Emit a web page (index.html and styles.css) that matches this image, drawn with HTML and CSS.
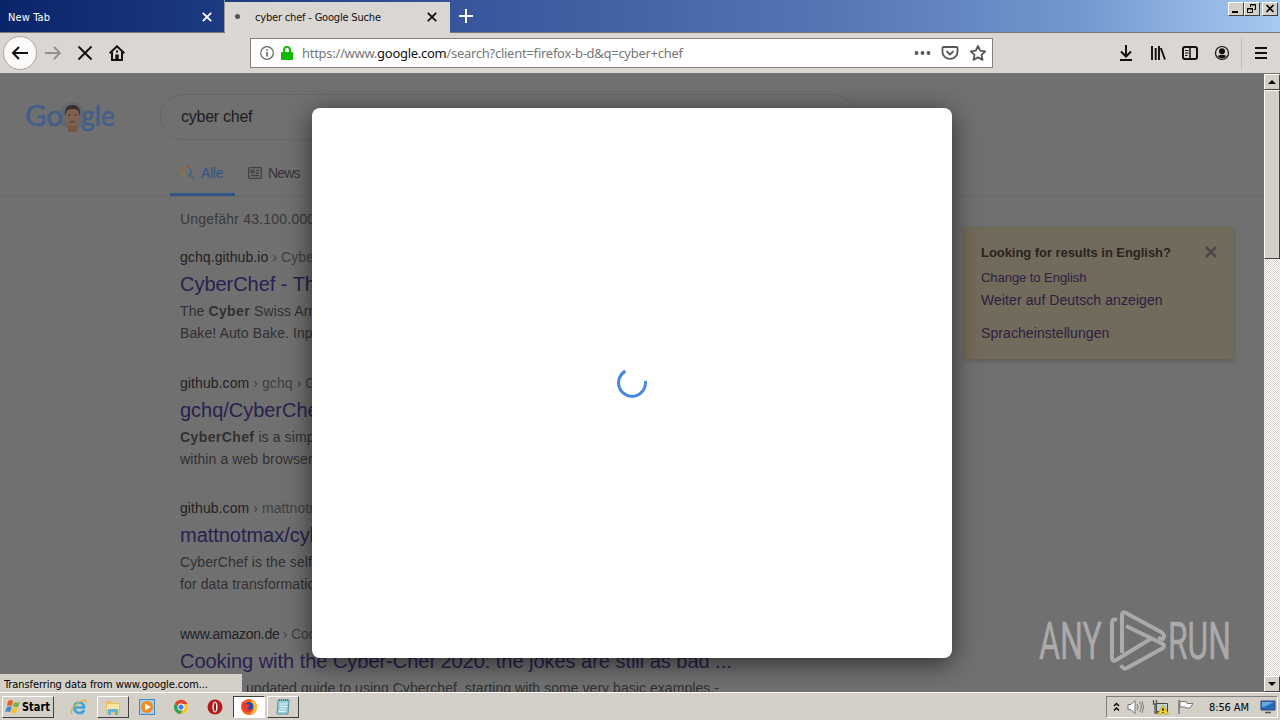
FILE: index.html
```html
<!DOCTYPE html>
<html lang="de">
<head>
    <meta charset="UTF-8">
    <meta name="viewport" content="width=device-width, initial-scale=1.0">
    <title>cyber chef - Google Suche</title>
    <link rel="stylesheet" href="styles.css">
</head>
<body>
    <div class="tabbar">
      <div class="tab">
        <svg class="tabtext" width="46" height="16"><text x="0" y="12" textLength="42">New Tab</text></svg>
        <svg width="10" height="10" viewBox="0 0 10 10"><path d="M.8.8l8.4 8.4M9.2.8L.8 9.2" stroke="#fff" stroke-width="1.8"/></svg>
      </div>
      <div class="tab active">
        <span class="dot"></span>
        <svg class="tabtext" width="130" height="16"><text x="0" y="12" textLength="126">cyber chef - Google Suche</text></svg>
        <svg width="10" height="10" viewBox="0 0 10 10"><path d="M.8.8l8.4 8.4M9.2.8L.8 9.2" stroke="#111" stroke-width="1.8"/></svg>
      </div>
      <svg class="plus" width="14" height="14"><path d="M7 0v14M0 7h14" stroke="#fff" stroke-width="2"/></svg>
      <div class="winbuttons">
        <span class="win"><svg width="14" height="12"><path d="M3 9h6" stroke="#000" stroke-width="2"/></svg></span>
        <span class="win"><svg width="14" height="12"><path d="M5.500 4V1.500h5v5H9M5 2h6M2.500 5.500h5v4h-5zM2 6h6" fill="none" stroke="#000"/></svg></span>
        <span class="win last"><svg width="14" height="12"><path d="M3.500 2l7 7M10.500 2l-7 7" stroke="#000" stroke-width="1.600"/></svg></span>
      </div>
    </div>

    <div class="toolbar">
      <div class="nav">
        <span class="back"><svg width="18" height="16" viewBox="0 0 18 16"><path d="M8 2L2 8l6 6M2 8h15" fill="none" stroke="#111" stroke-width="2"/></svg></span>
        <svg width="18" height="16" viewBox="0 0 18 16"><path d="M10 2l6 6-6 6M16 8H1" fill="none" stroke="#92908d" stroke-width="1.800"/></svg>
        <svg width="16" height="16" viewBox="0 0 16 16"><path d="M1.500 1.500l13 13M14.500 1.500l-13 13" stroke="#111" stroke-width="2"/></svg>
        <svg class="home" width="16" height="16" viewBox="0 0 16 16"><path d="M.7 8.300L8 1.300l7.300 7M3 7v8h10V7" fill="none" stroke="#111" stroke-width="2"/><path d="M6.300 15V9.500h3.400V15z" fill="#111"/><path d="M8 5.500v2" stroke="#111" stroke-width="2"/></svg>
      </div>
      <div class="urlbar">
        <svg width="14" height="14" viewBox="0 0 14 14"><circle cx="7" cy="7" r="6.300" fill="none" stroke="#666" stroke-width="1.200"/><path d="M7 6v4.500M7 3.300v1.500" stroke="#666" stroke-width="1.600"/></svg>
        <svg width="12" height="14" viewBox="0 0 12 14"><path d="M3 7V4a3 3 0 0 1 6 0v3" fill="none" stroke="#12bc00" stroke-width="2"/><rect y="6" width="12" height="8" rx="1" fill="#12b800"/></svg>
        <svg class="url" width="390" height="20"><text x="0" y="15" textLength="381">https://www.<tspan class="host">google.com</tspan>/search?client=firefox-b-d&amp;q=cyber+chef</text></svg>
        <svg class="urlicons" width="74" height="18" viewBox="0 0 74 18">
          <g fill="#555"><circle cx="2.500" cy="9" r="1.900"/><circle cx="8.500" cy="9" r="1.900"/><circle cx="14.500" cy="9" r="1.900"/></g>
          <g fill="none" stroke="#555" stroke-width="1.800">
            <path d="M29.500 3h13q1 0 1 1v4a7.300 6.600 0 0 1-15 0V4q0-1 1-1zM32.500 7.200l3.500 3.300 3.500-3.300" stroke-linejoin="round"/>
            <path d="M64 2l2.200 4.700 5 .6-3.700 3.500 1 5.100L64 13.400l-4.500 2.500 1-5.100-3.700-3.500 5-.6z" stroke-linejoin="round"/>
          </g>
        </svg>
      </div>
      <div class="tools">
        <svg width="16" height="16" viewBox="0 0 16 16"><path d="M8 0v11M3 6.500l5 5 5-5M2 15h12" fill="none" stroke="#111" stroke-width="2"/></svg>
        <svg width="16" height="16" viewBox="0 0 16 16"><path d="M2 1v14M5.700 3v12M9 1v14M10.800 3l4.200 11.500" fill="none" stroke="#111" stroke-width="1.900"/></svg>
        <svg width="16" height="16" viewBox="0 0 16 16"><rect x="1" y="2" width="14" height="12" rx="2" fill="none" stroke="#111" stroke-width="2"/><path d="M8 2v12" stroke="#111" stroke-width="1.500"/><path d="M3 5.500h3.500M3 8h3.500M3 10.500h2.500" stroke="#111"/></svg>
        <svg width="16" height="16" viewBox="0 0 16 16"><circle cx="8" cy="8" r="6.500" fill="none" stroke="#111" stroke-width="1.200"/><circle cx="8" cy="6.300" r="3" fill="#111"/><path d="M3.500 11q4.500-2.500 9 0-4.500 5-9 0z" fill="#111"/></svg>
        <span class="divider"></span>
        <svg width="14" height="14" viewBox="0 0 14 14"><path d="M1 2h12M1 7h12M1 12h12" stroke="#111" stroke-width="2"/></svg>
      </div>
    </div>

    <div class="viewport">
      <div class="page">
        <div class="header">
          <svg class="logo" width="100" height="40" viewBox="0 0 100 40">
            <circle cx="51.500" cy="16" r="13.500" fill="#626872"/>
            <text x="4" y="26" textLength="38" lengthAdjust="spacingAndGlyphs">Go</text>
            <text x="60" y="26" textLength="34" lengthAdjust="spacingAndGlyphs">gle</text>
            <path d="M47 22h9v10h-9z" fill="#765542"/>
            <ellipse cx="51.500" cy="17" rx="7" ry="10" fill="#80604f"/>
            <path d="M44 16q-1-11 7.500-11T59 16l-2-6q-5-2-11 0z" fill="#352c28"/>
            <path d="M47 15h3M53 15h3M49 22h5" stroke="#493a32"/>
          </svg>
          <div class="searchbox">cyber chef</div>
        </div>
        <div class="filters">
          <div class="filter current">
            <svg width="14" height="14" viewBox="0 0 14 14" fill="none" stroke-width="1.600"><path d="M1 5.500A4.500 4.500 0 0 1 5.500 1" stroke="#96663a"/><path d="M5.500 1A4.500 4.500 0 0 1 8.700 2.300" stroke="#96563a"/><path d="M1 5.500A4.500 4.500 0 0 0 5.500 10" stroke="#8d7938"/><path d="M5.500 10A4.500 4.500 0 0 0 8.700 8.700" stroke="#47735a"/><path d="M8.700 2.300A4.500 4.500 0 0 1 8.700 8.700L13 13" stroke="#3f6090"/></svg>
            <span>Alle</span>
          </div>
          <div class="filter">
            <svg width="14" height="12" viewBox="0 0 14 12" fill="none" stroke="#414244" stroke-width="1.300"><rect x=".7" y=".7" width="12.600" height="10.600" rx="1"/><path d="M3 3.500h3v2H3zM8 3.500h3M8 6h3M3 8.500h8"/></svg>
            <span>News</span>
          </div>
        </div>
        <div class="results">
          <div class="stats">Ungefähr 43.100.000 Ergebnisse</div>
          <div class="result">
            <div class="cite">gchq.github.io <span>› CyberChef</span></div>
            <div class="title">CyberChef - The Cyber Swiss Army Knife</div>
            <div class="snippet">The <b>Cyber</b> Swiss Army Knife<br>Bake! Auto Bake. Input</div>
          </div>
          <div class="result">
            <div class="cite">github.com <span>› gchq › CyberChef</span></div>
            <div class="title">gchq/CyberChef</div>
            <div class="snippet"><b>CyberChef</b> is a simple<br>within a web browser.</div>
          </div>
          <div class="result">
            <div class="cite">github.com <span>› mattnotmax</span></div>
            <div class="title">mattnotmax/cyberchef</div>
            <div class="snippet">CyberChef is the self<br>for data transformation</div>
          </div>
          <div class="result">
            <div class="cite amazon">www.amazon.de <span>› Cooking</span></div>
            <div class="title">Cooking with the Cyber-Chef 2020: the jokes are still as bad ...</div>
            <div class="snippet guide">updated guide to using Cyberchef, starting with some very basic examples.-</div>
          </div>
        </div>
        <div class="language">
          <div class="question"><b>Looking for results in English?</b>
            <svg width="12" height="12"><path d="M1 1l10 10M11 1L1 11" stroke="#48444b" stroke-width="2.400"/></svg>
          </div>
          <div class="link small">Change to English</div>
          <div class="link">Weiter auf Deutsch anzeigen</div>
          <div class="link settings">Spracheinstellungen</div>
        </div>
        <div class="dialog">
          <svg width="32" height="32" viewBox="0 0 32 32"><path d="M9.300 4.100A13.500 13.500 0 1 0 29.400 14" fill="none" stroke="#4a86e0" stroke-width="3"/></svg>
        </div>
        <svg class="watermark" width="200" height="70" viewBox="0 0 200 70">
          <text x="3" y="53" textLength="63" lengthAdjust="spacingAndGlyphs">ANY</text>
          <text x="132" y="53" textLength="63" lengthAdjust="spacingAndGlyphs">RUN</text>
          <g fill="none" stroke="#aaa" stroke-width="4" stroke-linejoin="round">
            <path d="M86 47V9q0-4 4-2l35 19q5 3 2 7l-5-1"/>
            <path d="M81 14q-5-2-5 3v35q0 4 4 2l36-22"/>
            <path d="M90 20l37 18q2 2 0 4L91 62q-4 2-6-3"/>
          </g>
        </svg>
        <div class="status"><svg width="214" height="16"><text x="0" y="12" textLength="204">Transferring data from www.google.com...</text></svg></div>
      </div>
      <div class="scrollbar">
        <span class="arrow"><svg width="8" height="4"><path d="M0 4l4-4 4 4z"/></svg></span>
        <span class="thumb"></span>
        <span class="arrow down"><svg width="8" height="4"><path d="M0 0l4 4 4-4z"/></svg></span>
      </div>
    </div>

    <div class="taskbar">
      <div class="start">
        <svg width="16" height="16" viewBox="0 0 16 16"><path d="M3 2q3-2 5 0L7 7Q4 6 2 7z" fill="#e5602c"/><path d="M9 3q3 1 6 0l-2 5q-3 1-5-1z" fill="#78b440"/><path d="M2 8q3-1 5 0l-2 5q-2-1-5 0z" fill="#4187cf"/><path d="M8 8q3 2 5 1l-2 5q-3 1-5-1z" fill="#f5c22e"/></svg>
        <svg width="30" height="16"><text x="0" y="12" textLength="28" lengthAdjust="spacingAndGlyphs">Start</text></svg>
      </div>
      <div class="apps">
        <span class="app"><svg width="18" height="18" viewBox="0 0 18 18" fill="none"><path d="M4.500 9.500H14Q14 5 9.500 4.500 4 5 4 10q1 5 6 5 3 0 4-3" stroke="#39a5dc" stroke-width="2.700"/><path d="M2 16Q-1 12 8 5q9-6 8 0" stroke="#deb542" stroke-width="1.300"/></svg></span>
        <span class="app open"><svg width="18" height="18" viewBox="0 0 18 18"><path d="M2 3h6l1 2h7v11H2z" fill="#e9c568"/><path d="M3 6h12v6H3z" fill="#f8e6a4"/><path d="M4 17v-6h10v6h-3v-3H7v3z" fill="#64b3db"/></svg></span>
        <span class="app"><svg width="18" height="18" viewBox="0 0 18 18"><rect x="1.500" y="1.500" width="15" height="15" fill="#a7cde9" stroke="#4089c7"/><circle cx="9" cy="9" r="6" fill="#f28b17"/><path d="M7 5.500l6 3.500-6 3.500z" fill="#fff"/></svg></span>
        <span class="app"><svg width="16" height="16" viewBox="0 0 16 16"><circle cx="8" cy="8" r="7" fill="#fbc329"/><path d="M1.900 4.500A7 7 0 0 1 14.500 5H8L4.800 9z" fill="#df4334"/><path d="M1.900 4.500A7 7 0 0 0 7.500 15L10 10H6z" fill="#2da252"/><circle cx="8" cy="8" r="3.500" fill="#fff"/><circle cx="8" cy="8" r="2.600" fill="#3c7fea"/></svg></span>
        <span class="app"><svg width="16" height="16" viewBox="0 0 16 16"><circle cx="8" cy="8" r="7.500" fill="#b41a1b"/><ellipse cx="8" cy="8" rx="2.600" ry="5.500" fill="#eee"/><ellipse cx="8" cy="8" rx="1" ry="4.500" fill="#8c1718"/></svg></span>
        <span class="app pressed"><svg width="18" height="18" viewBox="0 0 18 18"><circle cx="9" cy="9" r="8" fill="#f8661e"/><path d="M11 1q7 4 6 9-2 6-7 6 5-4 2-8z" fill="#fdc32f"/><circle cx="9" cy="8.500" r="4.500" fill="#2c4aa5"/><path d="M2 4q3-1 4 2l4 1-3 4q4 2 7-1-2 5-8 4Q1 12 2 4z" fill="#ef3b2c"/></svg></span>
        <span class="app open"><svg width="16" height="18" viewBox="0 0 16 18"><path d="M3 2h11l-1 14H2z" fill="#99d0dc" stroke="#5693a4"/><path d="M5 6h7M5 8.500h7M5 11h6M4 13.500h7" stroke="#e2f6f8"/><path d="M4 2h10" stroke="#627074" stroke-width="2" stroke-dasharray="1 1"/></svg></span>
      </div>
      <div class="tray">
        <svg width="7" height="10" viewBox="0 0 7 10"><path d="M1 4l2.500-2.500L6 4M1 8.500L3.500 6 6 8.500" fill="none" stroke="#000" stroke-width="1.400"/></svg>
        <svg width="18" height="16" viewBox="0 0 18 16" fill="none" stroke="#777"><path d="M1 5.500h3l4-4v13l-4-4H1z" fill="#fff"/><path d="M10 5q2 3 0 6M12.500 3q3.500 5 0 10M15 2q3 6 0 12"/></svg>
        <svg width="17" height="16" viewBox="0 0 17 16"><path d="M4.500 4.500h11v8h-11z" fill="#c6d1da" stroke="#444"/><path d="M1.500 1v4h3V1M3 5v9h5" fill="none" stroke="#555" stroke-width="1.300"/><path d="M11 6l5.500 9h-11z" fill="#f7d628" stroke="#a98d18" stroke-width=".6"/><path d="M11 9v3M11 13v1" stroke="#222" stroke-width="1.400"/></svg>
        <svg width="17" height="16" viewBox="0 0 17 16"><path d="M2 1v14" stroke="#777" stroke-width="1.500"/><path d="M3 2.500h6l1 2h6l-3 4.500H9L8 8H3z" fill="#fff" stroke="#777"/></svg>
        <svg class="clock" width="44" height="16"><text x="0" y="12" textLength="40">8:56 AM</text></svg>
        <svg width="16" height="14" viewBox="0 0 16 14"><path d="M1 1h14v9H1z" fill="#2868b8" stroke="#254d80"/><path d="M2 2h12L4 7H2z" fill="#67a9e4"/><path d="M5 12.500h6" stroke="#555" stroke-width="1.500"/></svg>
      </div>
    </div>
</body>
</html>
```
FILE: styles.css
```css
* {
  box-sizing: border-box;
}

body {
  margin: 0;
  width: 1280px;
  height: 720px;
  overflow: hidden;
  display: flex;
  flex-direction: column;
  font-family: "Liberation Sans", Arial, sans-serif;
  font-size: 14px;
}

svg {
  display: block;
  flex: none;
}

svg text {
  font-family: "DejaVu Sans Condensed", "DejaVu Sans", sans-serif;
  font-stretch: condensed;
  font-size: 11px;
}

/* tabs */
.tabbar {
  height: 33px;
  display: flex;
  background: linear-gradient(to right, #0a246a 0, #1c3a82 220px, #36559b 460px, #5575b5 830px, #7298cf 1080px, #a6caf0);
  border-bottom: 1px solid #77766f;
}

.tab {
  width: 225px;
  height: 32px;
  padding: 2px 12px 0 8px;
  display: flex;
  align-items: center;
  justify-content: space-between;
  border-right: 1px solid #999;
}

.tab text {
  fill: #fff;
}

.tab.active {
  height: 31px;
  margin-top: 2px;
  padding: 0 13px 2px 10px;
  background: #dad6d1;
  border-right: 0;
  box-shadow: 0 1px #dad6d1;
}

.tab.active text {
  fill: #111;
}

.tab.active .tabtext {
  margin-right: auto;
  margin-left: 15px;
}

.dot {
  width: 5px;
  height: 5px;
  border-radius: 50%;
  background: #555;
}

.plus {
  margin: 9px 0 0 9px;
}

.winbuttons {
  display: flex;
  margin: 2px 2px 0 auto;
}

.win {
  width: 16px;
  height: 14px;
  background: #d4d0c8;
  border: 1px solid;
  border-color: #fff #404040 #404040 #fff;
}

.last {
  margin-left: 2px;
}

/* toolbar */
.toolbar {
  height: 41px;
  display: flex;
  align-items: center;
  padding-left: 3px;
  background: #dad6d1;
  border-bottom: 1px solid #77766f;
}

.nav {
  width: 247px;
  display: flex;
  align-items: center;
  gap: 15px;
}

.back {
  width: 34px;
  height: 34px;
  display: flex;
  align-items: center;
  justify-content: center;
  border: 1px solid #aaa79f;
  border-radius: 50%;
  background: #fbfaf8;
  margin-right: -8px;
}

.home {
  margin-left: 1px;
}

.urlbar {
  width: 743px;
  height: 30px;
  padding: 0 4px 0 9px;
  display: flex;
  align-items: center;
  background: #fff;
  border: 1px solid #85837c;
  gap: 7px;
}

.url text {
  font-family: "Noto Sans", sans-serif;
  font-stretch: normal;
  font-size: 13px;
  fill: #777;
}

.url .host {
  fill: #111;
}

.url {
  margin-left: 2px;
}

.urlicons {
  margin-left: auto;
}

.tools {
  margin-left: auto;
  padding-right: 12px;
  display: flex;
  align-items: center;
  gap: 16px;
}

.divider {
  width: 1px;
  height: 32px;
  margin: 0 -4px 0 -5px;
  background: #c3bfb8;
}

/* page */
.viewport {
  height: 618px;
  display: flex;
}

.page {
  position: relative;
  width: 1264px;
  height: 618px;
  overflow: hidden;
  background: #707070;
}

.header {
  height: 66px;
  display: flex;
  padding: 20px 0 0 21px;
}

.logo {
  margin-top: 6px;
  overflow: visible;
}

.logo text {
  font-family: Lato, sans-serif;
  font-stretch: normal;
  font-size: 29px;
  fill: #435f8a;
  stroke: #435f8a;
  stroke-width: .6;
}

.searchbox {
  width: 696px;
  height: 46px;
  margin-left: 39px;
  padding: 0 20px;
  border: 1px solid #676767;
  border-radius: 23px;
  font-size: 16px;
  letter-spacing: -.25px;
  line-height: 44px;
  color: #1d1d1d;
}

.filters {
  height: 57px;
  padding-left: 170px;
  display: flex;
  align-items: flex-end;
  border-bottom: 1px solid #696969;
  color: #333537;
}

.filter {
  height: 46px;
  padding: 0 11px;
  display: flex;
  align-items: center;
  gap: 6px;
}

.filter + .filter {
  padding-left: 13px;
  letter-spacing: -.8px;
}

.current {
  color: #315488;
  width: 65px;
  border-bottom: 3px solid #315586;
  padding-top: 3px;
  letter-spacing: -.3px;
}

.results {
  width: 600px;
  padding: 11px 0 0 180px;
  box-sizing: content-box;
  white-space: nowrap;
}

.stats {
  height: 38px;
  line-height: 22px;
  letter-spacing: .2px;
  color: #393939;
}

.result {
  height: 125.600px;
}

.cite {
  height: 22px;
  line-height: 22px;
  letter-spacing: .08px;
  color: #222;
}

.cite span {
  color: #404040;
}

.amazon {
  letter-spacing: -.25px;
}

.title {
  height: 32px;
  line-height: 32px;
  font-size: 20px;
  letter-spacing: -.03px;
  color: #28214f;
}

.snippet {
  line-height: 22px;
  color: #303030;
  letter-spacing: .1px;
}

.snippet b {
  letter-spacing: .4px;
}

.guide {
  margin-left: 66px;
  letter-spacing: .05px;
}

/* language box lies over the right side of the results */
.language {
  position: absolute;
  left: 964px;
  top: 153px;
  width: 270px;
  height: 132px;
  padding: 16px;
  background: #726a5a;
  border: 1px solid #706b4c;
  box-shadow: 0 2px 4px #5c5c5c;
}

.question {
  display: flex;
  justify-content: space-between;
  font-size: 13px;
  height: 22px;
  line-height: 17px;
  letter-spacing: -.05px;
  color: #272521;
}

.question svg {
  margin: 2px 0 0;
}

.link {
  height: 23px;
  line-height: 23px;
  letter-spacing: .08px;
  color: #2c2143;
}

.small {
  font-size: 13px;
  letter-spacing: -.05px;
}

.settings {
  margin-top: 10px;
}

.dialog {
  position: absolute;
  left: 312px;
  top: 34px;
  width: 640px;
  height: 550px;
  display: flex;
  align-items: center;
  justify-content: center;
  background: #fff;
  border-radius: 8px;
  box-shadow: 0 5px 26px rgba(0, 0, 0, .6);
}

.watermark {
  position: absolute;
  left: 1036px;
  top: 532px;
  overflow: visible;
}

.watermark text {
  font-family: Roboto, sans-serif;
  font-stretch: normal;
  font-size: 51px;
  fill: #aaa;
  stroke: #aaa;
  stroke-width: .5;
}

.status {
  position: absolute;
  left: 0;
  bottom: 0;
  width: 242px;
  height: 18px;
  padding: 2px 0 0 4px;
  background: #d4d0c8;
}

.scrollbar {
  width: 16px;
  display: flex;
  flex-direction: column;
  background: repeating-conic-gradient(#fff 0 25%, #d8d4cc 0 50%) 0 0 / 2px 2px;
}

.arrow,
.thumb {
  height: 16px;
  display: flex;
  align-items: center;
  justify-content: center;
  background: #d4d0c8;
  border: 1px solid;
  border-color: #fff #404040 #404040 #fff;
}

.thumb {
  height: 169px;
}

.down {
  margin-top: auto;
}

/* taskbar */
.taskbar {
  height: 28px;
  padding: 1px 2px 0;
  display: flex;
  align-items: center;
  background: #d4d0c8;
  border-top: 1px solid #fff;
}

.start {
  width: 52px;
  height: 22px;
  padding-left: 2px;
  display: flex;
  align-items: center;
  gap: 1px;
  border: 1px solid;
  border-color: #fff #404040 #404040 #fff;
}

.start text {
  font-weight: bold;
  font-size: 12px;
}

.apps {
  display: flex;
  gap: 2px;
  margin-left: 9px;
}

.app {
  width: 32px;
  height: 22px;
  display: flex;
  align-items: center;
  justify-content: center;
}

.open {
  border: 1px solid;
  border-color: #fff #404040 #404040 #fff;
}

.pressed {
  background: #fff;
  border: 1px solid;
  border-color: #404040 #fff #fff #404040;
}

.tray {
  width: 172px;
  height: 22px;
  margin-left: auto;
  padding: 0 1px 0 6px;
  display: flex;
  align-items: center;
  justify-content: space-between;
  border: 1px solid;
  border-color: #808080 #fff #fff #808080;
}

.clock {
  margin-left: 8px;
}
```
